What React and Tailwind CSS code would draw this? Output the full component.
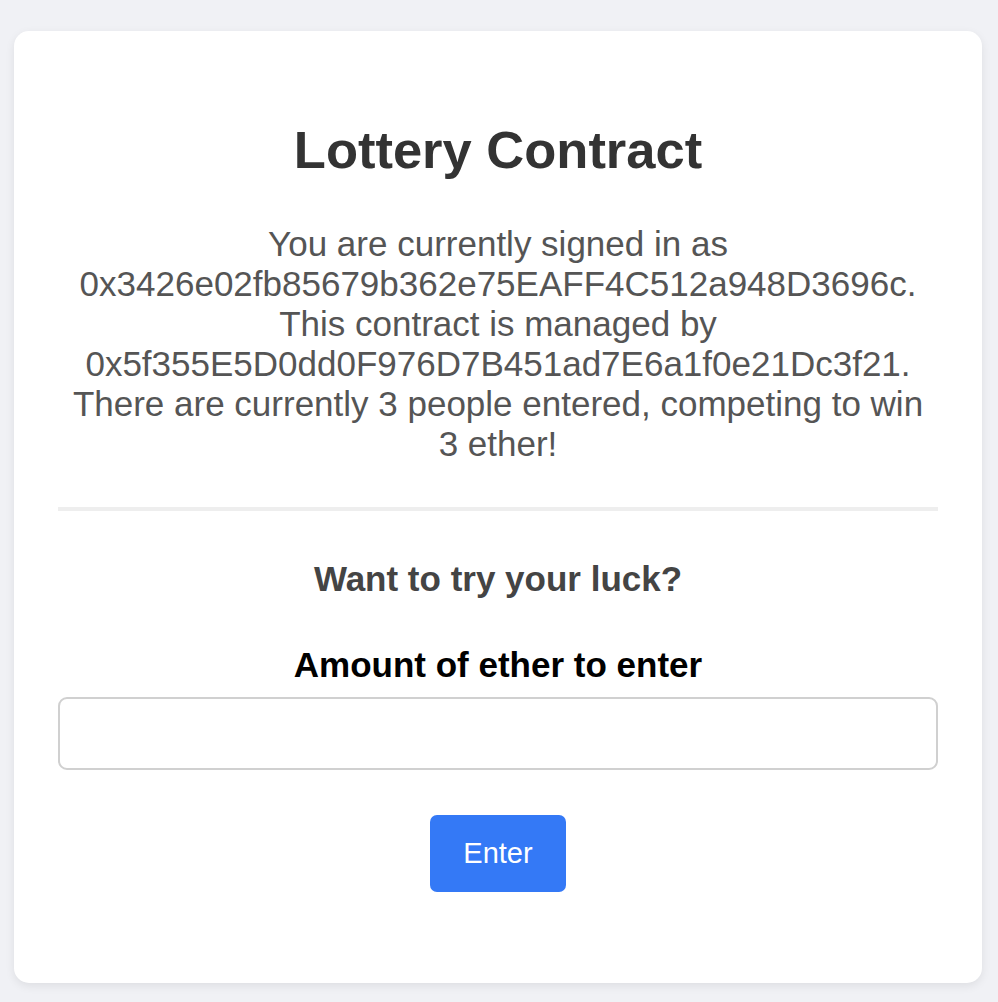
import React from "react";

const App = () => {
  return (
    <div className="min-h-[1002px] w-full bg-[#f0f1f5] pt-[31px] pb-[20px] pl-[14px] pr-[16px] font-['Liberation_Sans',Arial,sans-serif]">
      <div className="bg-white rounded-[15px] shadow-[0_3px_10px_rgba(0,0,0,0.08)] px-[44px] pt-[44px] pb-[44px] text-center">
        <h1 className="mt-[45px] text-[52.5px] leading-[59px] font-bold text-[#333]">
          Lottery Contract
        </h1>

        <p className="mt-[45px] text-[35px] leading-[40px] text-[#555]">
          You are currently signed in as
          0x3426e02fb85679b362e75EAFF4C512a948D3696c. This contract is managed
          by 0x5f355E5D0dd0F976D7B451ad7E6a1f0e21Dc3f21. There are currently 3
          people entered, competing to win 3&nbsp;ether!
        </p>

        <div className="mt-[43px] h-[3.5px] bg-[#eeeeee]" />

        <h3 className="mt-[48px] text-[35px] leading-[40px] font-bold text-[#444]">
          Want to try your luck?
        </h3>

        <label className="block mt-[46px] text-[35px] leading-[40px] font-bold text-black">
          Amount of ether to enter
        </label>
        <input
          type="text"
          className="mt-[12px] block w-full h-[73px] rounded-[9px] border-2 border-[#d0d0d0] bg-white px-4 text-[28px] outline-none"
        />

        <button
          type="button"
          className="mt-[45px] mb-[47px] w-[136px] h-[77px] rounded-[7px] bg-[#3479f6] text-white text-[29px] leading-none"
        >
          Enter
        </button>
      </div>
    </div>
  );
};

export default App;
